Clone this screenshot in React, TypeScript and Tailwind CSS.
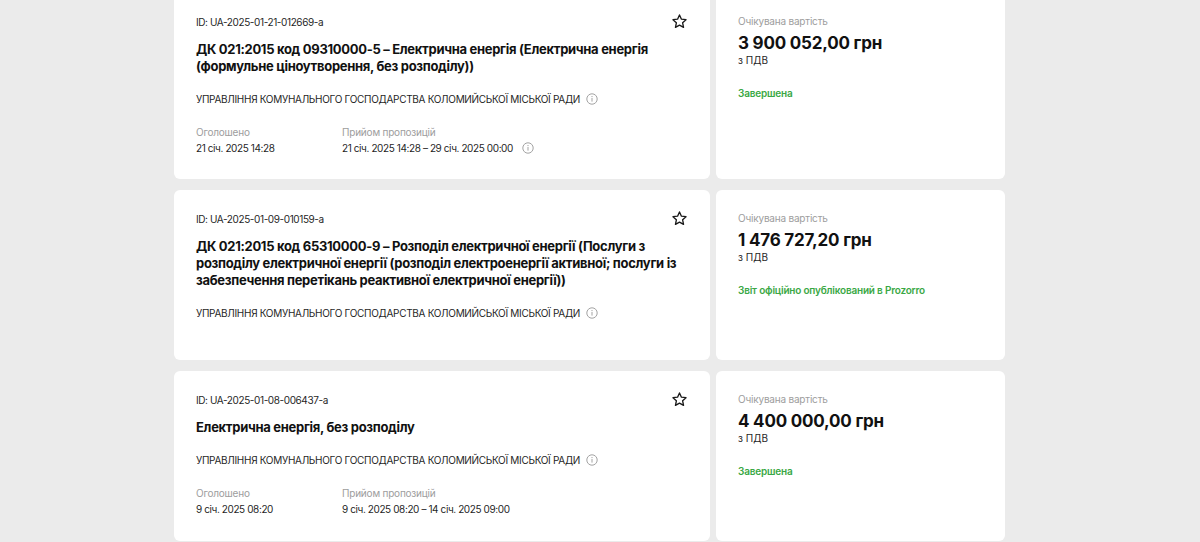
import React from "react";

type Tender = {
  id: string;
  title: string;
  org: string;
  announced?: string;
  period?: string;
  periodInfo?: boolean;
  price: string;
  status: string;
};

const tenders: Tender[] = [
  {
    id: "ID: UA-2025-01-21-012669-a",
    title:
      "ДК 021:2015 код 09310000-5 – Електрична енергія (Електрична енергія (формульне ціноутворення, без розподілу))",
    org: "УПРАВЛІННЯ КОМУНАЛЬНОГО ГОСПОДАРСТВА КОЛОМИЙСЬКОЇ МІСЬКОЇ РАДИ",
    announced: "21 січ. 2025 14:28",
    period: "21 січ. 2025 14:28 – 29 січ. 2025 00:00",
    periodInfo: true,
    price: "3 900 052,00 грн",
    status: "Завершена",
  },
  {
    id: "ID: UA-2025-01-09-010159-a",
    title:
      "ДК 021:2015 код 65310000-9 – Розподіл електричної енергії (Послуги з розподілу електричної енергії (розподіл електроенергії активної; послуги із забезпечення перетікань реактивної електричної енергії))",
    org: "УПРАВЛІННЯ КОМУНАЛЬНОГО ГОСПОДАРСТВА КОЛОМИЙСЬКОЇ МІСЬКОЇ РАДИ",
    price: "1 476 727,20 грн",
    status: "Звіт офіційно опублікований в Prozorro",
  },
  {
    id: "ID: UA-2025-01-08-006437-a",
    title: "Електрична енергія, без розподілу",
    org: "УПРАВЛІННЯ КОМУНАЛЬНОГО ГОСПОДАРСТВА КОЛОМИЙСЬКОЇ МІСЬКОЇ РАДИ",
    announced: "9 січ. 2025 08:20",
    period: "9 січ. 2025 08:20 – 14 січ. 2025 09:00",
    price: "4 400 000,00 грн",
    status: "Завершена",
  },
];

function InfoIcon() {
  return (
    <svg width="12" height="12" viewBox="0 0 12 12" className="shrink-0">
      <circle cx="6" cy="6" r="5.2" fill="none" stroke="#a3a3a3" strokeWidth="1" />
      <rect x="5.5" y="5" width="1" height="3.6" fill="#a3a3a3" />
      <rect x="5.5" y="3" width="1" height="1.1" fill="#a3a3a3" />
    </svg>
  );
}

function StarIcon() {
  return (
    <svg width="17" height="17" viewBox="0 0 24 24" className="shrink-0">
      <path
        d="M12 2.8l2.75 5.9 6.45.75-4.78 4.4 1.28 6.37L12 17.05 6.3 20.22l1.28-6.37L2.8 9.45l6.45-.75z"
        fill="none"
        stroke="#1a1a1a"
        strokeWidth="1.9"
        strokeLinejoin="round"
      />
    </svg>
  );
}

function Card({ t }: { t: Tender }) {
  return (
    <div className="flex gap-[6px] min-h-[170px]">
      <div className="w-[536px] bg-white rounded-[6px] pt-[22px] pb-[24px] pl-[22px] pr-[22px] flex flex-col">
        <div className="flex justify-between items-start">
          <div className="text-[10px] leading-[14px] tracking-[-0.4px] text-[#1f1f1f]">{t.id}</div>
          <div className="mt-[-2px] mr-[0px]">
            <StarIcon />
          </div>
        </div>
        <div className="mt-[11px] max-w-[486px] text-[13px] leading-[17px] font-bold tracking-[-0.3px] text-[#111]">
          {t.title}
        </div>
        <div className="mt-[17px] flex items-center gap-[6px] text-[10px] leading-[14px] tracking-[-0.3px] text-[#1f1f1f]">
          <span>{t.org}</span>
          <InfoIcon />
        </div>
        {t.announced && (
          <div className="mt-[19px] flex">
            <div className="w-[146px]">
              <div className="text-[10px] leading-[14px] tracking-[-0.2px] text-[#9d9d9d]">Оголошено</div>
              <div className="mt-[2px] text-[10px] leading-[14px] tracking-[-0.4px] text-[#1f1f1f]">{t.announced}</div>
            </div>
            <div>
              <div className="text-[10px] leading-[14px] tracking-[-0.2px] text-[#9d9d9d]">Прийом пропозицій</div>
              <div className="mt-[2px] flex items-center gap-[9px] text-[10px] leading-[14px] tracking-[-0.4px] text-[#1f1f1f]">
                <span>{t.period}</span>
                {t.periodInfo && <InfoIcon />}
              </div>
            </div>
          </div>
        )}
      </div>
      <div className="w-[289px] bg-white rounded-[6px] pt-[21px] pl-[22px] pr-[22px] flex flex-col">
        <div className="text-[10px] leading-[14px] tracking-[-0.2px] text-[#9d9d9d]">Очікувана вартість</div>
        <div className="mt-[5px] text-[17px] leading-[20px] font-bold tracking-[-0.2px] text-[#111]">{t.price}</div>
        <div className="text-[10px] leading-[14px] text-[#1f1f1f]">з ПДВ</div>
        <div className="mt-[19px] text-[10px] leading-[14px] font-semibold tracking-[-0.2px] text-[#3aa845]">{t.status}</div>
      </div>
    </div>
  );
}

export default function App() {
  return (
    <div
      className="w-[1200px] h-[542px] overflow-hidden bg-[#ebebeb]"
      style={{ fontFamily: "Inter, 'Noto Sans', sans-serif" }}
    >
      <div className="ml-[174px] mt-[-7px] flex flex-col gap-[11px]">
        {tenders.map((t) => (
          <Card key={t.id} t={t} />
        ))}
      </div>
    </div>
  );
}
